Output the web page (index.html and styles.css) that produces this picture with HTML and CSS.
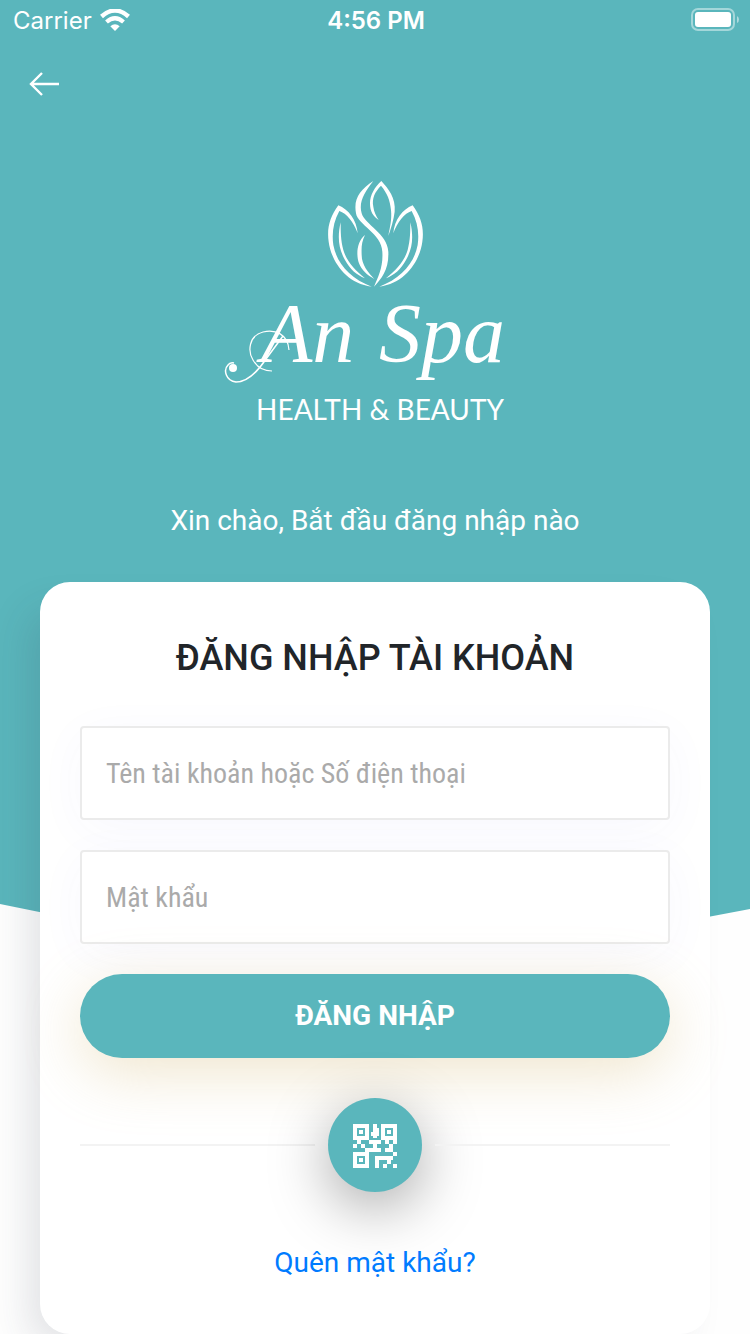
FILE: index.html
```html
<!DOCTYPE html>
<html lang="vi">
<head>
<meta charset="utf-8">
<meta name="viewport" content="width=device-width, initial-scale=1">
<title>An Spa</title>
<link rel="stylesheet" href="styles.css">
</head>
<body>
<div class="screen">
  <header class="status">
    <div class="status-carrier">
      <span>Carrier</span>
      <svg width="30" height="22" viewBox="0 0 30 22" fill="none" stroke="#fff" aria-hidden="true">
        <path d="M1.500 7.500Q15-4.500 28.500 7.500" stroke-width="4.400"/>
        <path d="M6.500 13Q15 5.500 23.500 13" stroke-width="4.200"/>
        <path d="M10.300 17.300Q15 13 19.700 17.300L15 22z" fill="#fff" stroke="none"/>
      </svg>
    </div>
    <time class="status-time">4:56&#8197;PM</time>
    <svg class="status-battery" width="48" height="24" viewBox="0 0 48 24" aria-hidden="true">
      <rect x="1" y="1" width="42" height="21" rx="6" fill="none" stroke="#fff" stroke-opacity=".45" stroke-width="2"/>
      <rect x="4" y="4" width="36" height="15" rx="3" fill="#fff"/>
      <path d="M46 8q2 1 2 3.500t-2 3.500z" fill="#fff" fill-opacity=".5"/>
    </svg>
  </header>
  <nav class="nav">
    <button class="back" type="button" aria-label="Quay lại">
      <svg width="32" height="24" viewBox="0 0 32 24" fill="none" stroke="#fff" stroke-width="2.400" aria-hidden="true"><path d="M13 1 2 12l11 11M2 12h28"/></svg>
    </button>
  </nav>
  <div class="brand">
    <svg class="logo" width="300" height="250" viewBox="0 0 300 250" role="img" aria-label="An Spa Health &amp; Beauty">
      <g fill="#fff" transform="translate(85 -6) scale(.3333)">
        <path d="M190 33C150 60 130 85 138 130C143 165 215 190 217 245C220 290 205 320 192 350C215 325 237 300 235 245C232 190 165 165 155 130C145 95 165 65 190 33Z"/>
        <path d="M214 33C235 55 258 85 254 125C251 150 243 175 235 198C240 170 246 150 243 120C240 90 232 70 213 47C195 65 185 85 190 110C192 125 198 138 206 150C190 140 180 125 180 100C180 75 195 50 214 33Z"/>
        <path d="M165 195C140 215 138 255 147 280C155 300 170 315 193 327C175 308 155 285 155 255C154 230 155 215 165 195Z"/>
        <g id="petal">
          <path d="M85 106C60 140 50 175 56 215C63 270 105 340 185 350C120 325 80 280 70 225C65 190 70 155 88 123C110 130 130 155 143 190C140 150 115 118 85 106Z"/>
          <path d="M92 157C82 200 85 235 105 270C120 298 140 315 165 325C135 300 110 275 100 240C92 210 92 185 92 157Z"/>
        </g>
        <use href="#petal" transform="matrix(-1 0 0 1 393 0)"/>
      </g>
      <g class="logo-name"><text x="36" y="186">An</text><text x="154" y="186">Spa</text></g>
      <g fill="none" stroke="#fff">
        <path d="M64 174C63 158 50 153 38 156C23 160 23 176 28 184C32 191 39 195 47 195" stroke-width="1.200"/>
        <path d="M58 160L41 183C33 195 23 206 11 206C1 205-2 194 3 189Q5 186 9 187" stroke-width="1.500"/>
      </g>
      <circle cx="8" cy="192" r="4" fill="#fff"/>
      <text class="logo-tag" x="155" y="244" text-anchor="middle">HEALTH &amp; BEAUTY</text>
    </svg>
    <p class="greeting">Xin chào, Bắt đầu đăng nhập nào</p>
  </div>
  <main class="card">
    <h1 class="title">ĐĂNG NHẬP TÀI KHOẢN</h1>
    <form class="form">
      <input class="field" type="text" aria-label="Tên tài khoản hoặc Số điện thoại" placeholder="Tên tài khoản hoặc Số điện thoại">
      <input class="field" type="password" aria-label="Mật khẩu" placeholder="Mật khẩu">
      <button class="submit" type="submit">ĐĂNG NHẬP</button>
    </form>
    <div class="divider">
      <button class="qr" type="button" aria-label="Quét mã QR">
        <svg width="44" height="44" viewBox="0 0 22 22" fill="#fff" shape-rendering="crispEdges" aria-hidden="true">
          <path fill-rule="evenodd" d="M0 0h8v8H0zM2 2v4h4V2zM3 3h2v2H3zM14 0h8v8h-8zM16 2v4h4V2zM17 3h2v2h-2zM0 14h8v8H0zM2 16v4h4v-4zM3 17h2v2H3z"/>
          <path d="M10 0h2v2h1v4h-1v1h-2V6H9V4h1zM2 8h2v2H2zM0 10h2v2H0zM4 10h2v2H4zM8 8h6v2h-2v2h2v2H6v-2h4v-2H8zM16 8h2v2h-2zM20 8h2v2h-2zM18 10h2v2h-2zM16 12h4v2h-4zM20 14h2v2h-2zM11 16h9v2h-1v2h-2v-2h-4v4h-2zM15 20h2v2h-2zM20 20h2v2h-2z"/>
        </svg>
      </button>
    </div>
    <a class="forgot" href="#">Quên mật khẩu?</a>
  </main>
</div>
</body>
</html>
```
FILE: styles.css
```css
* { box-sizing: border-box; }
body { margin: 0; background: #fefefe; font-family: Roboto, "Noto Sans", sans-serif; }
.screen {
  position: relative;
  isolation: isolate;
  display: flex;
  flex-direction: column;
  min-height: 100vh;
  overflow: hidden;
}
.screen::before {
  content: "";
  position: absolute;
  z-index: -1;
  inset: 0 0 auto;
  height: 980px;
  background: #5ab6bc;
  clip-path: polygon(0 0, 100% 0, 100% 909px, 50% 980px, 0 904px);
}
.status {
  display: grid;
  grid-template-columns: 1fr auto 1fr;
  align-items: center;
  height: 40px;
  padding: 0 11px 0 13px;
  color: #fff;
  font: 24px Inter, sans-serif;
}
.status-carrier { display: flex; align-items: center; gap: 8px; }
.status-time { font-weight: 600; }
.status-battery { justify-self: end; }
.nav { display: flex; padding: 20px 29px; }
.back { display: flex; padding: 12px 0; border: 0; background: none; }
.brand { display: flex; flex-direction: column; align-items: center; padding: 48px 20px 0; }
.logo { display: block; max-width: 100%; overflow: visible; }
.logo-name { fill: #fff; font: italic 84px "Liberation Serif", serif; }
.logo-tag { fill: #fff; font: 400 28px Lato, sans-serif; }
.greeting { margin: 74px 0 0; color: #fff; font-size: 28px; line-height: 42px; }
.card {
  display: flex;
  flex-direction: column;
  margin: 40px 40px 0;
  padding: 50px 40px;
  border-radius: 30px;
  background: #fff;
  box-shadow: -20px 20px 40px -10px rgba(46, 55, 77, .15);
}
.title { margin: 0; color: #212529; font-size: 36px; font-weight: 500; line-height: 52px; text-align: center; }
.form { display: flex; flex-direction: column; gap: 30px; margin-top: 42px; }
.field {
  width: 100%;
  height: 94px;
  padding: 0 24px;
  border: 2px solid #ebebeb;
  border-radius: 4px;
  outline: 0;
  background: #fff;
  box-shadow: 0 10px 50px rgba(83, 65, 230, .04);
  color: #212529;
  font: 28px "Liberation Sans Narrow", "Roboto Condensed", Roboto, sans-serif;
}
.field::placeholder { color: #aaa; opacity: 1; }
.submit {
  height: 84px;
  padding: 0 0 2px;
  border: 0;
  border-radius: 42px;
  background: #5ab6bc;
  box-shadow: 0 15px 60px rgba(208, 178, 102, .32);
  color: #fff;
  font: 700 28px Roboto, sans-serif;
}
.divider { display: flex; align-items: center; gap: 13px; margin-top: 40px; }
.divider::before, .divider::after { content: ""; flex: 1; height: 2px; background: #f3f3f3; }
.qr {
  display: flex;
  align-items: center;
  justify-content: center;
  width: 94px;
  height: 94px;
  padding: 2px 0 0;
  border: 0;
  border-radius: 50%;
  background: #5ab6bc;
  box-shadow: 0 15px 60px rgba(0, 0, 0, .35);
}
.forgot { align-self: center; margin-top: 50px; color: #007bff; font-size: 28px; line-height: 42px; text-decoration: none; }
```
